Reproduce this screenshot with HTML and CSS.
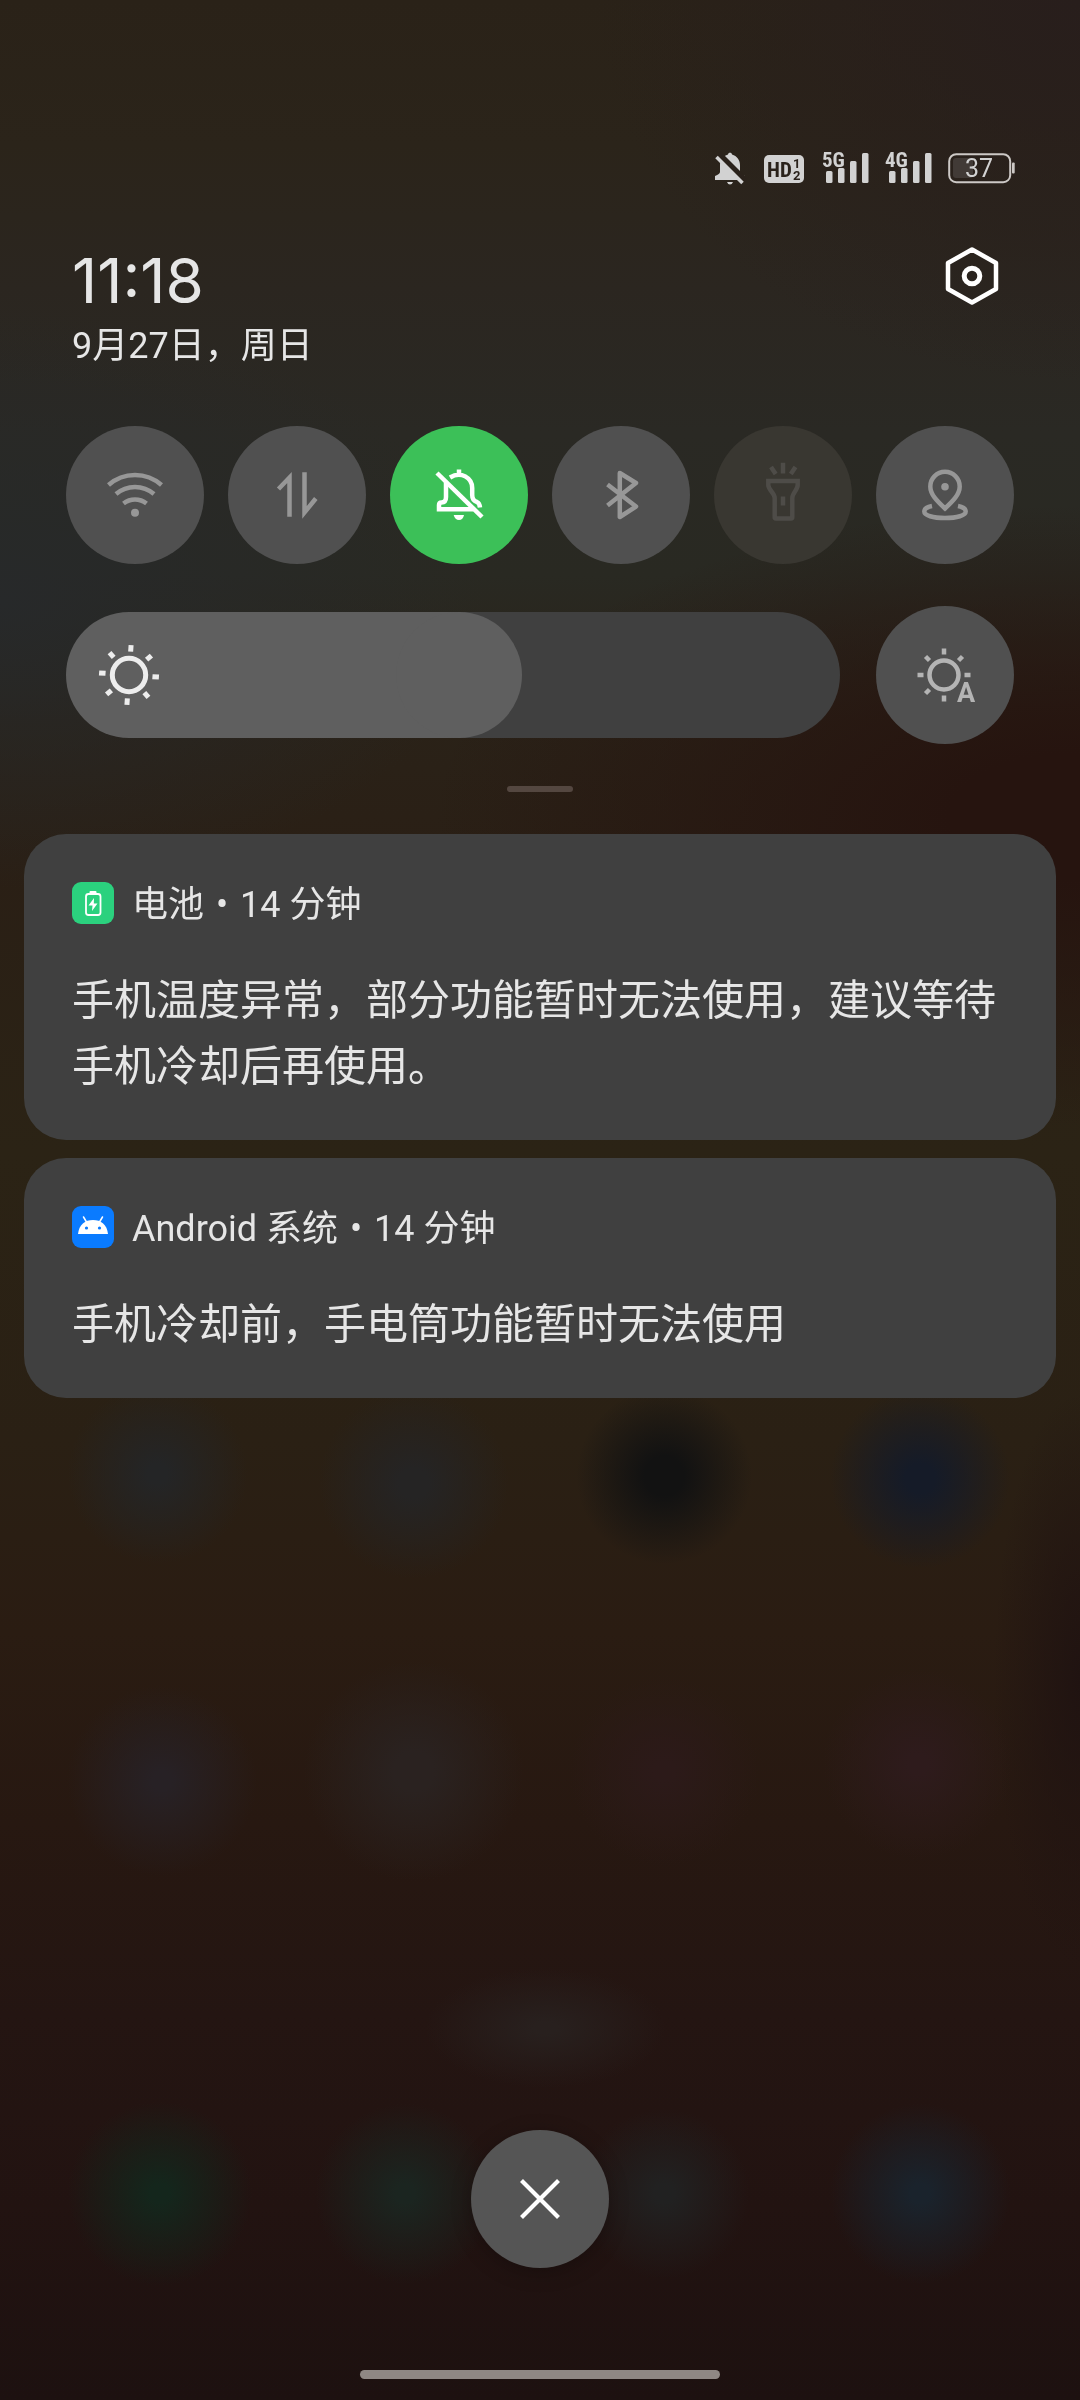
FILE: index.html
```html
<!DOCTYPE html>
<html lang="zh-CN">
<head>
<meta charset="UTF-8" />
<meta name="viewport" content="width=device-width, initial-scale=1" />
<title>通知中心</title>
<link rel="stylesheet" href="styles.css">
</head>
<body>
  <div class="wallpaper"></div>
  <main class="shade">
    <div class="status-bar">
      <svg width="34" height="34" viewBox="0 0 34 34" fill="#d2d2d2">
        <path d="M14 3.5 C14 1 18 1 18 3.5 C23 5 26 9 26 14 V21 Q26 23 31 25 V29 H1 V25 Q6 23 6 21 V14 C6 9 9 5 14 3.5 Z" />
        <path d="M13 31 H19 Q18 33.5 16 33.5 T13 31 Z" />
        <path d="M4 3 L31 30" stroke="#2a221b" stroke-width="7" />
        <path d="M2.5 6 L28.5 32" stroke="#d2d2d2" stroke-width="3.5" />
      </svg>
      <svg width="44" height="34" viewBox="0 0 44 34">
        <rect x="1" y="4" width="40" height="28" rx="5" fill="#d2d2d2" />
        <text class="net" x="4" y="26" fill="#2a221b">HD</text>
        <text class="sim" x="30" y="17" fill="#2a221b">1</text>
        <text class="sim" x="30" y="29" fill="#2a221b">2</text>
      </svg>
      <svg width="48" height="34" viewBox="0 0 48 34" fill="#d2d2d2">
        <text class="net" x="0" y="16">5G</text>
        <rect x="4" y="20" width="6.5" height="12" rx="1.5" />
        <rect x="16" y="17" width="6.5" height="15" rx="1.5" />
        <rect x="28" y="10" width="6.5" height="22" rx="1.5" />
        <rect x="40" y="2" width="6.5" height="30" rx="1.5" />
      </svg>
      <svg width="48" height="34" viewBox="0 0 48 34" fill="#d2d2d2">
        <text class="net" x="0" y="16">4G</text>
        <rect x="4" y="20" width="6.5" height="12" rx="1.5" />
        <rect x="16" y="17" width="6.5" height="15" rx="1.5" />
        <rect x="28" y="10" width="6.5" height="22" rx="1.5" />
        <rect x="40" y="2" width="6.5" height="30" rx="1.5" />
      </svg>
      <svg width="68" height="34" viewBox="0 0 68 34">
        <rect x="5" y="7" width="20" height="20" rx="3" fill="#413a36" />
        <rect x="1.2" y="3.2" width="61" height="28" rx="7" fill="none" stroke="#cdc9c6" stroke-width="2" />
        <rect x="64" y="11.5" width="2.7" height="11" rx="1" fill="#cdc9c6" />
        <text class="charge" x="31" y="26" text-anchor="middle" fill="#d2d2d2">37</text>
      </svg>
    </div>

    <header class="header">
      <div>
        <div class="time">11:18</div>
        <div class="date">9月27日，周日</div>
      </div>
      <button class="settings" aria-label="设置">
        <svg width="60" height="60" viewBox="0 0 60 60" fill="none" stroke="#fff" stroke-linejoin="round">
          <path d="M30 3.5 L54 17 V43 L30 56.5 L6 43 V17 Z" stroke-width="4.5" />
          <circle cx="30" cy="30" r="7.8" stroke-width="5" />
        </svg>
      </button>
    </header>

    <div class="tiles">
      <button class="tile" aria-label="WLAN">
        <svg viewBox="-6 -6 72 72">
          <path d="M3.5 20 A40 40 0 0 1 56.5 20 M11 29 A29 29 0 0 1 49 29 M18.5 38.5 A18.5 18.5 0 0 1 41.5 38.5" />
          <circle class="solid" cx="30" cy="47.7" r="4" />
        </svg>
      </button>
      <button class="tile" aria-label="移动数据">
        <svg viewBox="-6 -6 72 72">
          <path d="M11.5 24 L22.5 12.5 V51.7 M37.5 7.3 V47.5 L48.8 33.5" />
        </svg>
      </button>
      <button class="tile active" aria-label="静音" aria-pressed="true">
        <svg viewBox="-6 -6 72 72">
          <path d="M17 17.5 V32 Q17 37.5 12.5 37.5 Q10 37.5 10 40 V44.3 H44 M21 12.5 C32 5.5 43.2 13 43.2 23 V30 Q43.2 35.5 48 37 Q50.5 38 51 42.5 M30 4.5 V10" />
          <path d="M8 8 L53 52" />
          <path class="solid" d="M24.7 50 H35 Q34 55 30 55 T24.7 50 Z" />
        </svg>
      </button>
      <button class="tile" aria-label="蓝牙">
        <svg viewBox="-6 -6 72 72" stroke-linejoin="round">
          <path d="M16.5 19.5 L45 41.5 L28.8 52 V8 L45 18 L16.5 40.5" />
        </svg>
      </button>
      <button class="tile" aria-label="手电筒" disabled>
        <svg viewBox="-6 -6 72 72">
          <path d="M15.3 16 H44.7 V20 C44.7 25 39.3 28 39.3 33 V52 Q39.3 53.5 38 53.5 H23 Q21.7 53.5 21.7 52 V33 C21.7 28 15.3 25 15.3 20 Z M30 31.5 V40.5 M30 -2.3 V8.5 M18 2 L22.7 9 M42.5 2 L37.8 9" />
        </svg>
      </button>
      <button class="tile" aria-label="位置信息">
        <svg viewBox="-6 -6 72 72">
          <path d="M30 43.5 C22 36 15.3 29.5 15.3 21.5 A14.7 14.7 0 0 1 44.7 21.5 C44.7 29.5 38 36 30 43.5 Z" />
          <path d="M17 41 C12 42 9.3 44 9.3 46.5 C9.3 50.5 18 53 30 53 S50.7 50.5 50.7 46.5 C50.7 44 48 42 43 41" />
          <circle class="solid" cx="30" cy="21.7" r="3.8" />
        </svg>
      </button>
    </div>

    <div class="brightness">
      <label class="slider">
        <svg width="64" height="64" viewBox="-32 -32 64 64" fill="none" stroke="#ededed" stroke-width="5">
          <circle r="16.7" />
          <path transform="rotate(4)" d="M0 -23.5 V-30 M0 23.5 V30 M-23.5 0 H-30 M23.5 0 H30 M16.5 -16.5 L21 -21 M-16.5 -16.5 L-21 -21 M16.5 16.5 L21 21 M-16.5 16.5 L-21 21" />
        </svg>
        <input type="range" min="0" max="100" value="51" aria-label="亮度">
      </label>
      <button class="tile auto" aria-label="自动亮度">
        <svg viewBox="-36 -36 72 72">
          <g transform="translate(-1 0)">
            <circle r="14.5" />
            <path d="M0 -20.5 V-26.5 M0 20.5 V26.5 M-20.5 0 H-26.5 M20.5 0 H26.5 M14.5 -14.5 L18.5 -18.5 M-14.5 -14.5 L-18.5 -18.5 M-14.5 14.5 L-18.5 18.5" />
          </g>
          <text x="21" y="27" text-anchor="middle">A</text>
        </svg>
      </button>
    </div>

    <div class="handle"></div>

    <section class="notifications">
      <article class="card">
        <div class="card-head">
          <svg width="42" height="42" viewBox="0 0 42 42">
            <rect width="42" height="42" rx="9" fill="#2bd17e" />
            <rect x="14" y="12" width="14.5" height="21" rx="2.5" fill="none" stroke="#fff" stroke-width="1.8" />
            <rect x="17.5" y="9" width="7" height="3" rx="1" fill="#fff" />
            <path d="M22 16 L16.5 23.5 H20.5 L20 29 L25.5 21.5 H21.8 Z" fill="#fff" />
          </svg>
          <div class="source">电池 <span class="dot">•</span> 14 分钟</div>
        </div>
        <p>手机温度异常，部分功能暂时无法使用，建议等待手机冷却后再使用。</p>
      </article>
      <article class="card">
        <div class="card-head">
          <svg width="42" height="42" viewBox="0 0 42 42">
            <rect width="42" height="42" rx="9" fill="#0a7bff" />
            <path d="M6 28 C7 18.5 13 14 21 14 S35 18.5 36 28 Z" fill="#fff" />
            <path d="M11.5 11 L14.5 16 M30.5 11 L27.5 16" stroke="#fff" stroke-width="1.5" stroke-linecap="round" />
            <circle cx="14.5" cy="22" r="1.6" fill="#0a7bff" />
            <circle cx="27.5" cy="22" r="1.6" fill="#0a7bff" />
          </svg>
          <div class="source">Android 系统 <span class="dot">•</span> 14 分钟</div>
        </div>
        <p>手机冷却前，手电筒功能暂时无法使用</p>
      </article>
    </section>

    <button class="close" aria-label="清除全部通知">
      <svg width="48" height="48" viewBox="0 0 48 48" stroke="#fff" stroke-width="4.2">
        <path d="M5.5 5.5 L42.5 42.5 M42.5 5.5 L5.5 42.5" />
      </svg>
    </button>
    <div class="home-bar"></div>
  </main>
</body>
</html>
```
FILE: styles.css
```css
* {
  box-sizing: border-box;
}
body {
  margin: 0;
  background: #241711;
  color: #e6e6e6;
  font-family: Roboto, "Noto Sans CJK SC", sans-serif;
}
button {
  border: none;
  padding: 0;
  background: none;
  cursor: pointer;
}
svg {
  display: block;
  flex: none;
  overflow: visible;
}

/* blurred home screen behind the shade */
.wallpaper {
  position: fixed;
  inset: 0;
  z-index: -1;
  background:
    radial-gradient(circle at 14.6% 61.4%, #242526 10px, transparent 90px),
    radial-gradient(circle at 38.3% 61.8%, #252424 15px, transparent 95px),
    radial-gradient(circle at 61.5% 61.5%, #121212 20px, transparent 88px),
    radial-gradient(circle at 85.2% 61.6%, #151b28 15px, transparent 90px),
    radial-gradient(circle at 15% 74.2%, #272125 10px, transparent 95px),
    radial-gradient(circle at 38.3% 73.8%, #2a2220 20px, transparent 110px),
    radial-gradient(circle at 61.5% 73.8%, #2c1a19 10px, transparent 95px),
    radial-gradient(circle at 85% 73.5%, #2e1b1c 10px, transparent 95px),
    radial-gradient(ellipse 120px 60px at 50.5% 84.5%, #28201e 10%, transparent),
    radial-gradient(circle at 14.8% 91.4%, #14261c 10px, transparent 92px),
    radial-gradient(circle at 37.5% 91.4%, #1b2520 10px, transparent 90px),
    radial-gradient(circle at 61.5% 91.4%, #212121 10px, transparent 85px),
    radial-gradient(circle at 85.2% 91.4%, #1a232c 10px, transparent 90px),
    radial-gradient(ellipse 45% 12% at 0% 25%, #27292a, transparent),
    radial-gradient(ellipse 60% 13% at 100% 34%, #26140f 20%, transparent),
    radial-gradient(ellipse 45% 16% at 100% 0%, #281e1c, transparent),
    radial-gradient(ellipse 8% 12% at 100% 70%, #201311, transparent),
    linear-gradient(#2a2218 0%, #2b241a 6%, #2b2620 12%, #2a2924 18%, #292922 24%, #2a2218 30%, #2a1f15 36%, #2b2315 48%, #2a2014 60%, #2a1c12 68%, #271811 76%, #241512 84%, #221311 92%, #1d1110 100%);
}

.shade {
  display: flex;
  flex-direction: column;
  min-height: 100vh;
  padding: 151px 24px 21px;
}

.status-bar {
  display: flex;
  justify-content: flex-end;
  gap: 15px;
  padding-right: 40px;
}
.net {
  font: bold 21px/1 "Liberation Sans Narrow", "Roboto Condensed", Roboto, sans-serif;
}
.sim {
  font: bold 13px/1 Roboto, sans-serif;
}
.charge {
  font: 25px/1 Roboto, sans-serif;
}

.header {
  display: flex;
  justify-content: space-between;
  align-items: flex-start;
  margin-top: 61px;
  padding: 0 54px 0 48px;
}
.time {
  font-family: Inter, Roboto, sans-serif;
  font-size: 62px;
  line-height: 70px;
}
.date {
  font-size: 36px;
  line-height: 60px;
}
.settings {
  width: 60px;
  height: 60px;
}

.tiles {
  display: flex;
  justify-content: space-between;
  margin-top: 50px;
  padding: 0 42px;
}
.tile {
  display: flex;
  align-items: center;
  justify-content: center;
  flex: none;
  width: 138px;
  height: 138px;
  border-radius: 50%;
  background: #505050;
  color: #979797;
}
.tile svg {
  width: 72px;
  height: 72px;
  fill: none;
  stroke: currentColor;
  stroke-width: 4.5px;
}
.tile .solid,
.tile text {
  fill: currentColor;
  stroke: none;
}
.tile text {
  font: bold 27px Roboto, sans-serif;
}
.tile.active {
  background: #3cc058;
  color: #fff;
}
.tile:disabled {
  background: #393731;
  color: #4e4c48;
  cursor: default;
}
.tile.auto {
  color: #b4b4b4;
}

.brightness {
  display: flex;
  align-items: center;
  gap: 36px;
  margin-top: 42px;
  padding: 0 42px;
}
.slider {
  position: relative;
  flex: 1;
}
.slider svg {
  position: absolute;
  left: 31px;
  top: 31px;
  pointer-events: none;
}
.slider input {
  display: block;
  appearance: none;
  width: 100%;
  height: 126px;
  margin: 0;
  border-radius: 63px;
  background: linear-gradient(#5f5f5f, #5f5f5f) no-repeat 0 0 / 51% 100% #404040;
}
.slider input::-webkit-slider-thumb {
  appearance: none;
  width: 126px;
  height: 126px;
  border-radius: 50%;
  background: #5f5f5f;
}

.handle {
  align-self: center;
  width: 66px;
  height: 6px;
  margin-top: 42px;
  border-radius: 3px;
  background: #544740;
}

.notifications {
  display: flex;
  flex-direction: column;
  gap: 18px;
  margin-top: 42px;
}
.card {
  padding: 48px 48px 40px;
  border-radius: 42px;
  background: #404040;
}
.card-head {
  display: flex;
  align-items: center;
  gap: 18px;
  height: 42px;
}
.source {
  padding-top: 4px;
  font-size: 36px;
  line-height: 42px;
}
.dot {
  margin: 0 3px;
}
.card p {
  margin: 44px 0 0;
  font-size: 42px;
  line-height: 66px;
}

.close {
  display: flex;
  align-items: center;
  justify-content: center;
  align-self: center;
  width: 138px;
  height: 138px;
  margin-top: auto;
  border-radius: 50%;
  background: #555;
  box-shadow: 0 4px 20px rgba(0, 0, 0, 0.25);
}
.home-bar {
  align-self: center;
  width: 360px;
  height: 9px;
  margin-top: 102px;
  border-radius: 5px;
  background: #8f8784;
}
```
